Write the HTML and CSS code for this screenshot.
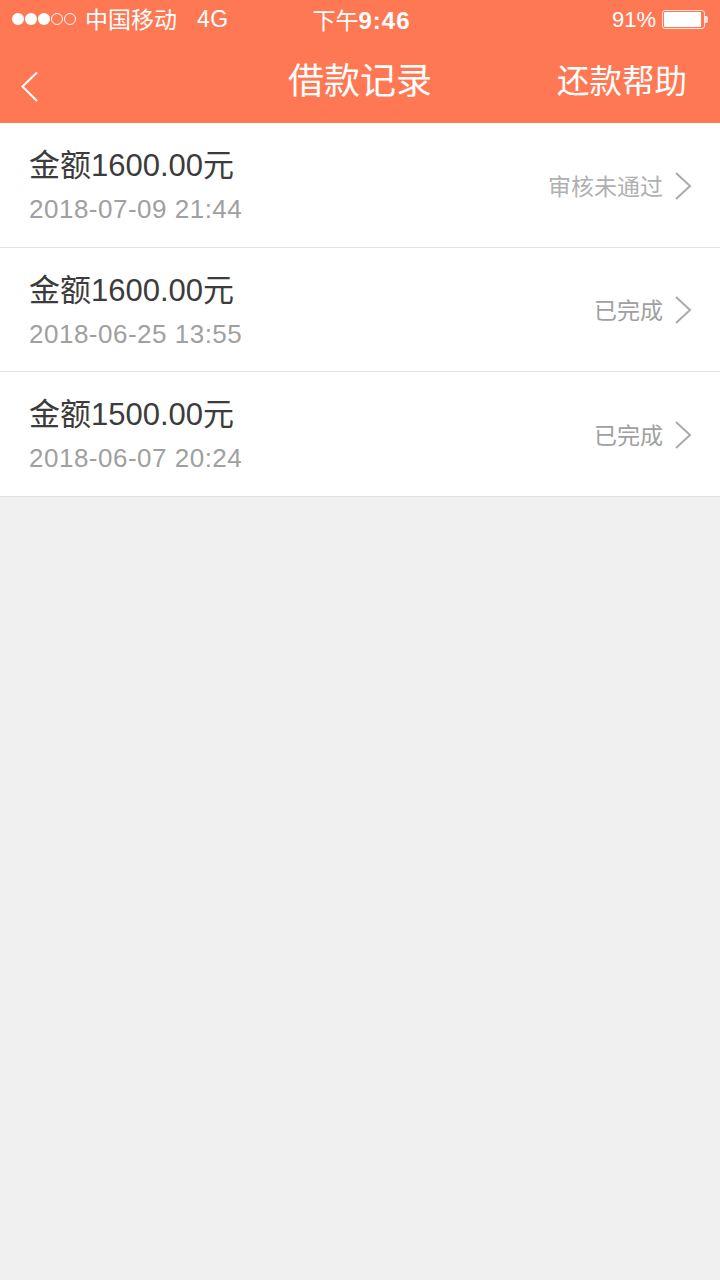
FILE: index.html
```html
<!DOCTYPE html>
<html lang="zh-CN">
<head>
    <meta charset="UTF-8">
    <title>借款记录</title>
    <link rel="stylesheet" href="styles.css">
</head>
<body>
<div class="header">
    <div class="status-bar">
        <div class="status-left">
            <div class="signal">
                <span class="dot"></span>
                <span class="dot"></span>
                <span class="dot"></span>
                <span class="dot empty"></span>
                <span class="dot empty"></span>
            </div>
            <span class="carrier">中国移动</span>
            <span class="network">4G</span>
        </div>
        <div class="status-time">下午<span class="clock">9:46</span></div>
        <div class="status-right">
            <span class="battery-text">91%</span>
            <div class="battery">
                <div class="battery-body"><div class="battery-level"></div></div>
                <div class="battery-tip"></div>
            </div>
        </div>
    </div>
    <div class="nav-bar">
        <svg class="back-icon" width="20" height="32" viewBox="0 0 20 32">
            <path d="M17 1.500 L2.500 15.500 L17 30" fill="none" stroke="#fff" stroke-width="2"/>
        </svg>
        <div class="nav-title">借款记录</div>
        <div class="nav-help">还款帮助</div>
    </div>
</div>

<div class="record-list">
    <div class="record">
        <div class="record-info">
            <div class="record-amount">金额1600.00元</div>
            <div class="record-date">2018-07-09 21:44</div>
        </div>
        <div class="record-status light">审核未通过</div>
        <svg class="arrow-icon" width="18" height="28" viewBox="0 0 18 28">
            <path d="M2 1 L16 14 L2 27" fill="none" stroke="#aaa" stroke-width="2"/>
        </svg>
    </div>
    <div class="record">
        <div class="record-info">
            <div class="record-amount">金额1600.00元</div>
            <div class="record-date">2018-06-25 13:55</div>
        </div>
        <div class="record-status">已完成</div>
        <svg class="arrow-icon" width="18" height="28" viewBox="0 0 18 28">
            <path d="M2 1 L16 14 L2 27" fill="none" stroke="#aaa" stroke-width="2"/>
        </svg>
    </div>
    <div class="record">
        <div class="record-info">
            <div class="record-amount">金额1500.00元</div>
            <div class="record-date">2018-06-07 20:24</div>
        </div>
        <div class="record-status">已完成</div>
        <svg class="arrow-icon" width="18" height="28" viewBox="0 0 18 28">
            <path d="M2 1 L16 14 L2 27" fill="none" stroke="#aaa" stroke-width="2"/>
        </svg>
    </div>
</div>
</body>
</html>
```

FILE: styles.css
```css
* {
    box-sizing: border-box;
}
body {
    margin: 0;
    height: 1280px;
    overflow: hidden;
    background-color: #f0f0f0;
    font-family: "Liberation Sans", "Noto Sans CJK SC", sans-serif;
}
.header {
    height: 123px;
    background-color: #ff7854;
    color: #fff;
}
.status-bar {
    height: 40px;
    display: grid;
    grid-template-columns: 1fr auto 1fr;
    align-items: center;
    padding: 0 12px 2px;
    font-size: 23px;
}
.status-left {
    display: flex;
    align-items: center;
}
.signal {
    display: flex;
    gap: 1px;
    margin-right: 9px;
}
.dot {
    width: 12px;
    height: 12px;
    border-radius: 50%;
    background-color: #fff;
}
.dot.empty {
    background-color: transparent;
    border: 1px solid #fff;
}
.carrier {
    margin-top: -2px;
}
.network {
    margin-left: 20px;
    margin-top: 1px;
    letter-spacing: 0.500px;
}
.status-time {
    margin-left: 3px;
    margin-top: -1px;
}
.clock {
    font-size: 24px;
    font-weight: bold;
    letter-spacing: 1px;
}
.status-right {
    display: flex;
    justify-content: flex-end;
    align-items: center;
    gap: 6px;
}
.battery-text {
    font-size: 22px;
    margin-top: 2px;
}
.battery {
    display: flex;
    align-items: center;
}
.battery-body {
    width: 43px;
    height: 19px;
    border: 1px solid rgba(255, 255, 255, 0.8);
    border-radius: 3px;
    padding: 1px;
}
.battery-level {
    width: 94%;
    height: 100%;
    background-color: #fff;
    border-radius: 1px;
}
.battery-tip {
    width: 3px;
    height: 7px;
    background-color: rgba(255, 255, 255, 0.8);
    border-radius: 0 2px 2px 0;
}
.nav-bar {
    height: 83px;
    display: flex;
    align-items: center;
    justify-content: space-between;
    position: relative;
    padding: 0 33px 5px 20px;
}
.back-icon {
    margin-top: 16px;
}
.nav-title {
    position: absolute;
    left: 0;
    right: 0;
    top: 12px;
    text-align: center;
    font-size: 36px;
}
.nav-help {
    font-size: 32.500px;
    margin-top: -2px;
}
.record-list {
    background-color: #fff;
}
.record {
    height: 124.500px;
    display: flex;
    align-items: center;
    padding: 0 28px 0 29px;
    border-bottom: 1px solid #e2e2e2;
}
.record-info {
    flex: 1;
    margin-top: 3px;
}
.record-amount {
    font-size: 31px;
    color: #3c3c3c;
    line-height: 40px;
    margin-bottom: 6px;
}
.record-date {
    font-size: 26px;
    color: #a0a0a0;
    line-height: 34px;
    letter-spacing: 0.500px;
}
.record-status {
    font-size: 23px;
    color: #a0a0a0;
    margin-right: 11px;
}
.record-status.light {
    color: #b0b0b0;
}
.arrow-icon {
    margin-top: 2px;
}
```
